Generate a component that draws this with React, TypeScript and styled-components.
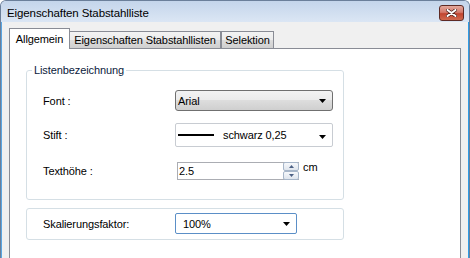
import React from "react";
import styled, { createGlobalStyle } from "styled-components";

const GlobalStyle = createGlobalStyle`
  html, body {
    margin: 0;
    padding: 0;
    background: #ffffff;
  }
  body {
    font-family: "Liberation Sans", Arial, sans-serif;
    font-size: 11px;
    letter-spacing: -0.1px;
    color: #000;
  }
`;

const Window = styled.div`
  width: 470px;
  height: 258px;
  display: flex;
  flex-direction: column;
  overflow: hidden;
  box-sizing: border-box;
  border-radius: 6px 6px 0 0;
  border: 1px solid #6b7f9a;
  border-bottom: none;
  background: #d6e2f1;
`;

const TitleBar = styled.div`
  height: 21px;
  flex: none;
  display: flex;
  align-items: center;
  justify-content: space-between;
  padding: 0 5px 0 6px;
  background: linear-gradient(to bottom, #c4d5eb, #dbe6f4);
  font-size: 11.5px;
`;

const TitleText = styled.span`
  margin-top: 2px;
`;

const CloseButton = styled.div`
  width: 23px;
  height: 14px;
  margin-top: 2px;
  border: 1px solid #5e2a24;
  border-radius: 3px;
  display: flex;
  align-items: center;
  justify-content: center;
  background: linear-gradient(
    to bottom,
    #e3a89d 0%,
    #d47a6b 45%,
    #c2452f 55%,
    #d06a4f 100%
  );
`;

const Body = styled.div`
  flex: 1;
  display: flex;
  flex-direction: column;
  background: #f0f0f0;
  border-left: 1px solid #5aa6e2;
  border-right: 1px solid #2f9ce6;
  padding: 7px 7px 0 7px;
`;

const TabRow = styled.div`
  display: flex;
  align-items: flex-end;
  height: 20px;
  position: relative;
  z-index: 1;
  margin-bottom: -1px;
`;

const Tab = styled.div<{ $active?: boolean; $w: number }>`
  box-sizing: border-box;
  width: ${(p) => p.$w}px;
  display: flex;
  align-items: center;
  justify-content: center;
  white-space: nowrap;
  border: 1px solid #898c95;
  border-bottom: ${(p) => (p.$active ? "none" : "1px solid #898c95")};
  height: ${(p) => (p.$active ? "21px" : "18px")};
  padding-bottom: ${(p) => (p.$active ? "1px" : "0")};
  margin-right: ${(p) => (p.$active ? "-1px" : "0")};
  background: ${(p) =>
    p.$active
      ? "#ffffff"
      : "linear-gradient(to bottom, #f3f3f3 0%, #ebebeb 50%, #dddddd 50%, #cfcfcf 100%)"};
  position: relative;
  z-index: ${(p) => (p.$active ? 2 : 1)};
`;

const Panel = styled.div`
  flex: 1;
  background: #ffffff;
  border: 1px solid #898c95;
  border-bottom: none;
  padding: 15px 16px 0 16px;
  display: flex;
  flex-direction: column;
  gap: 8px;
`;

const Group = styled.fieldset`
  width: 318px;
  box-sizing: border-box;
  margin: 0;
  padding: 0;
  border: 1px solid #d5dfe5;
  border-radius: 3px;
  min-inline-size: 0;
`;

const Legend = styled.legend`
  margin-left: 5px;
  padding: 0 2px;
  color: #0a1a3c;
  line-height: 13px;
`;

const Rows = styled.div<{ $pad: string }>`
  padding: ${(p) => p.$pad};
  display: flex;
  flex-direction: column;
`;

const Row = styled.div<{ $h: number; $top: number }>`
  display: flex;
  align-items: center;
  height: ${(p) => p.$h}px;
  margin-top: ${(p) => p.$top}px;
`;

const Label = styled.div`
  width: 132px;
  flex: none;
`;

const Combo = styled.div<{ $kind: "button" | "plain" | "focus" }>`
  box-sizing: border-box;
  height: 100%;
  width: ${(p) => (p.$kind === "focus" ? "122px" : "158px")};
  display: flex;
  align-items: center;
  padding: 0 6px 0 ${(p) => (p.$kind === "focus" ? "7px" : "2px")};
  border-radius: ${(p) => (p.$kind === "button" ? "3px" : "2px")};
  border: 1px solid
    ${(p) =>
      p.$kind === "button"
        ? "#707070"
        : p.$kind === "focus"
        ? "#5b8fc7"
        : "#c8ccd2"};
  background: ${(p) =>
    p.$kind === "button"
      ? "linear-gradient(to bottom, #f3f3f3 0%, #ebebeb 50%, #dddddd 50%, #cfcfcf 100%)"
      : "#ffffff"};
`;

const ComboText = styled.span`
  flex: 1;
  white-space: nowrap;
`;

const PenLine = styled.span`
  width: 36px;
  height: 2px;
  background: #000;
  flex: none;
  margin-right: 9px;
`;

const Arrow = styled.svg<{ $drop?: number }>`
  flex: none;
  margin-top: ${(p) => p.$drop ?? 0}px;
`;

const SpinField = styled.div`
  box-sizing: border-box;
  height: 18px;
  width: 122px;
  margin-left: 2px;
  display: flex;
  border: 1px solid #abadb3;
  border-right: none;
  background: #fff;
`;

const SpinText = styled.div`
  flex: 1;
  display: flex;
  align-items: center;
  padding-left: 1px;
`;

const SpinButtons = styled.div`
  width: 16px;
  display: flex;
  flex-direction: column;
  margin-top: -1px;
  margin-bottom: -1px;
`;

const SpinButton = styled.div`
  flex: 1;
  box-sizing: border-box;
  border: 1px solid #a7b6c9;
  border-radius: 2px;
  background: linear-gradient(to bottom, #f6f8fb, #dfe5ed);
  display: flex;
  align-items: center;
  justify-content: center;
`;

const Unit = styled.span`
  align-self: flex-start;
  margin-left: 4px;
  margin-top: -1px;
`;

const DropArrow = ({ drop }: { drop?: number }) => (
  <Arrow width="7" height="4" viewBox="0 0 7 4" $drop={drop}>
    <path d="M0 0H7L3.5 4Z" fill="#000" />
  </Arrow>
);

const SpinArrow = ({ up }: { up?: boolean }) => (
  <svg width="5" height="3" viewBox="0 0 5 3">
    <path d={up ? "M0 3H5L2.5 0Z" : "M0 0H5L2.5 3Z"} fill="#4d6185" />
  </svg>
);

const App = () => (
  <>
    <GlobalStyle />
    <Window>
      <TitleBar>
        <TitleText>Eigenschaften Stabstahlliste</TitleText>
        <CloseButton>
          <svg width="11" height="8" viewBox="0 0 11 8">
            <path
              d="M1.5 1L9.5 7M9.5 1L1.5 7"
              stroke="#4a1d16"
              strokeWidth="3.4"
              strokeLinecap="round"
            />
            <path
              d="M1.5 1L9.5 7M9.5 1L1.5 7"
              stroke="#ffffff"
              strokeWidth="2"
              strokeLinecap="round"
            />
          </svg>
        </CloseButton>
      </TitleBar>
      <Body>
        <TabRow>
          <Tab $active $w={61}>
            Allgemein
          </Tab>
          <Tab $w={152}>Eigenschaften Stabstahllisten</Tab>
          <Tab $w={53}>Selektion</Tab>
        </TabRow>
        <Panel>
          <Group>
            <Legend>Listenbezeichnung</Legend>
            <Rows $pad="13px 0 19px 16px">
              <Row $h={21} $top={0}>
                <Label>Font :</Label>
                <Combo $kind="button">
                  <ComboText>Arial</ComboText>
                  <DropArrow />
                </Combo>
              </Row>
              <Row $h={24} $top={12}>
                <Label>Stift :</Label>
                <Combo $kind="plain">
                  <PenLine />
                  <ComboText>schwarz 0,25</ComboText>
                  <DropArrow drop={3} />
                </Combo>
              </Row>
              <Row $h={18} $top={15}>
                <Label>Texthöhe :</Label>
                <SpinField>
                  <SpinText>2.5</SpinText>
                  <SpinButtons>
                    <SpinButton>
                      <SpinArrow up />
                    </SpinButton>
                    <SpinButton>
                      <SpinArrow />
                    </SpinButton>
                  </SpinButtons>
                </SpinField>
                <Unit>cm</Unit>
              </Row>
            </Rows>
          </Group>
          <Group as="div">
            <Rows $pad="4px 0 5px 16px">
              <Row $h={21} $top={0}>
                <Label>Skalierungsfaktor:</Label>
                <Combo $kind="focus">
                  <ComboText>100%</ComboText>
                  <DropArrow />
                </Combo>
              </Row>
            </Rows>
          </Group>
        </Panel>
      </Body>
    </Window>
  </>
);

export default App;
